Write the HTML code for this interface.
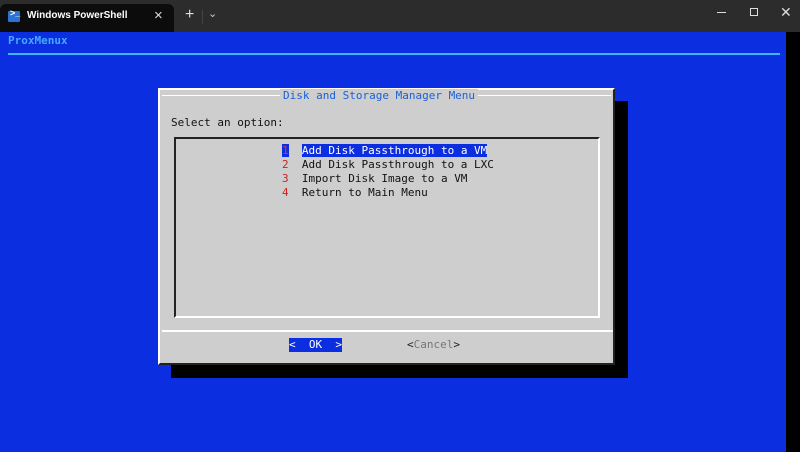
<!DOCTYPE html><html><head><style>
body{margin:0;width:800px;height:452px;overflow:hidden;background:#000;position:relative;font-family:"DejaVu Sans Mono","Liberation Mono",monospace;font-size:11px}
div{position:absolute;box-sizing:border-box}
.t{white-space:pre;line-height:14px}
</style></head><body>
<div style="left:0;top:0;width:800px;height:32px;background:#2c2c2c"></div>
<div style="left:0;top:4px;width:174px;height:28px;background:#0c0c0c;border-radius:6px 6px 0 0"></div>
<div style="left:8px;top:11px;width:12px;height:11px;background:#2a73d4;border-radius:1px"></div>
<div style="left:10px;top:8px;color:#fff;font:bold 9px 'Liberation Sans'">&gt;_</div>
<div style="left:27px;top:10px;color:#fff;font:bold 10px 'Liberation Sans',sans-serif">Windows PowerShell</div>
<div style="left:154px;top:7px;color:#ddd;font:15px 'Liberation Sans'">×</div>
<div style="left:185px;top:6px;color:#ddd;font:16px 'Liberation Sans'">+</div>
<div style="left:202px;top:10px;width:1px;height:14px;background:#444"></div>
<div style="left:208px;top:7px;color:#ccc;font:11px 'Liberation Sans'">⌄</div>
<div style="left:717px;top:12px;width:9px;height:1px;background:#ddd"></div>
<div style="left:750px;top:8px;width:8px;height:8px;border:1px solid #ddd"></div>
<div style="left:780px;top:4px;color:#ddd;font:14px 'Liberation Sans'">✕</div>
<div style="left:0;top:32px;width:786px;height:420px;background:#0a2ee0"></div>
<div class="t" style="left:8px;top:34px;color:#46a8ff;font-weight:bold">ProxMenux</div>
<div style="left:8px;top:53px;width:772px;height:2px;background:#3ab8ff"></div>
<div style="left:171px;top:101px;width:457px;height:277px;background:#000"></div>
<div style="left:158px;top:88px;width:457px;height:277px;background:#cecece;border-left:2px solid #fff;border-top:2px solid #fff;border-right:2px solid #222;border-bottom:2px solid #222"></div>
<div style="left:162px;top:95px;width:449px;height:1px;background:#fff"></div>
<div class="t" style="left:280px;top:89px;background:#cecece;color:#1a5fd8;padding:0 3px">Disk and Storage Manager Menu</div>
<div class="t" style="left:171px;top:116px;color:#111">Select an option:</div>
<div style="left:174px;top:137px;width:426px;height:181px;border-left:2px solid #222;border-top:2px solid #222;border-right:2px solid #fff;border-bottom:2px solid #fff"></div>
<div class="t" style="left:282px;top:144px;color:#111"><span style="background:#0a2ee0;color:#e33">1</span>  <span style="background:#0a2ee0;color:#fff">Add Disk Passthrough to a VM</span>
<span style="color:#c22">2</span>  Add Disk Passthrough to a LXC
<span style="color:#c22">3</span>  Import Disk Image to a VM
<span style="color:#c22">4</span>  Return to Main Menu</div>
<div style="left:162px;top:330px;width:451px;height:2px;background:#fff"></div>
<div class="t" style="left:289px;top:338px;width:53px;background:#0a2ee0;color:#fff">&lt;  OK  &gt;</div>
<div class="t" style="left:407px;top:338px;color:#777"><span style="color:#222">&lt;</span>Cancel<span style="color:#222">&gt;</span></div>
</body></html>
